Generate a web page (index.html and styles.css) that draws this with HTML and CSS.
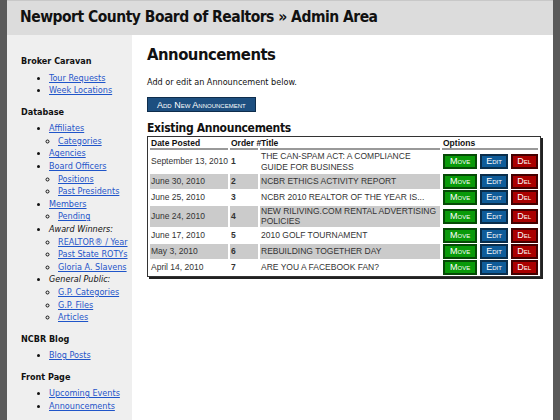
FILE: index.html
```html
<!DOCTYPE html>
<html lang="en">
<head>
    <meta charset="UTF-8">
    <title>NCBR Admin Area</title>
    <link rel="stylesheet" href="styles.css">
</head>
<body>
    <div class="page">
        <div class="header">Newport County Board of Realtors &raquo; Admin Area</div>

        <div class="body">
            <div class="sidebar">
                <h3>Broker Caravan</h3>
                <ul>
                    <li><a href="#">Tour Requests</a></li>
                    <li><a href="#">Week Locations</a></li>
                </ul>

                <h3>Database</h3>
                <ul>
                    <li><a href="#">Affiliates</a>
                        <ul>
                            <li><a href="#">Categories</a></li>
                        </ul>
                    </li>
                    <li><a href="#">Agencies</a></li>
                    <li><a href="#">Board Officers</a>
                        <ul>
                            <li><a href="#">Positions</a></li>
                            <li><a href="#">Past Presidents</a></li>
                        </ul>
                    </li>
                    <li><a href="#">Members</a>
                        <ul>
                            <li><a href="#">Pending</a></li>
                        </ul>
                    </li>
                    <li><em>Award Winners:</em>
                        <ul>
                            <li><a href="#">REALTOR&reg; / Year</a></li>
                            <li><a href="#">Past State ROTYs</a></li>
                            <li><a href="#">Gloria A. Slavens</a></li>
                        </ul>
                    </li>
                    <li><em>General Public:</em>
                        <ul>
                            <li><a href="#">G.P. Categories</a></li>
                            <li><a href="#">G.P. Files</a></li>
                            <li><a href="#">Articles</a></li>
                        </ul>
                    </li>
                </ul>

                <h3>NCBR Blog</h3>
                <ul>
                    <li><a href="#">Blog Posts</a></li>
                </ul>

                <h3>Front Page</h3>
                <ul>
                    <li><a href="#">Upcoming Events</a></li>
                    <li><a href="#">Announcements</a></li>
                </ul>
            </div>

            <div class="main">
                <h1>Announcements</h1>
                <p class="intro">Add or edit an Announcement below.</p>
                <button class="btn btn-add">Add New Announcement</button>

                <h2>Existing Announcements</h2>
                <table class="list">
                    <thead>
                        <tr>
                            <th class="c-date">Date Posted</th>
                            <th class="c-order">Order #</th>
                            <th class="c-title">Title</th>
                            <th class="c-opts">Options</th>
                        </tr>
                    </thead>
                    <tbody>
                        <tr>
                            <td class="date">September 13, 2010</td>
                            <td class="order">1</td>
                            <td>THE CAN-SPAM ACT: A COMPLIANCE GUIDE FOR BUSINESS</td>
                            <td class="opts"><div class="opts-row"><span class="btn btn-move">Move</span><span class="btn btn-edit">Edit</span><span class="btn btn-del">Del</span></div></td>
                        </tr>
                        <tr class="alt">
                            <td class="date">June 30, 2010</td>
                            <td class="order">2</td>
                            <td>NCBR ETHICS ACTIVITY REPORT</td>
                            <td class="opts"><div class="opts-row"><span class="btn btn-move">Move</span><span class="btn btn-edit">Edit</span><span class="btn btn-del">Del</span></div></td>
                        </tr>
                        <tr>
                            <td class="date">June 25, 2010</td>
                            <td class="order">3</td>
                            <td>NCBR 2010 REALTOR OF THE YEAR IS...</td>
                            <td class="opts"><div class="opts-row"><span class="btn btn-move">Move</span><span class="btn btn-edit">Edit</span><span class="btn btn-del">Del</span></div></td>
                        </tr>
                        <tr class="alt">
                            <td class="date">June 24, 2010</td>
                            <td class="order">4</td>
                            <td>NEW RILIVING.COM RENTAL ADVERTISING POLICIES</td>
                            <td class="opts"><div class="opts-row"><span class="btn btn-move">Move</span><span class="btn btn-edit">Edit</span><span class="btn btn-del">Del</span></div></td>
                        </tr>
                        <tr>
                            <td class="date">June 17, 2010</td>
                            <td class="order">5</td>
                            <td>2010 GOLF TOURNAMENT</td>
                            <td class="opts"><div class="opts-row"><span class="btn btn-move">Move</span><span class="btn btn-edit">Edit</span><span class="btn btn-del">Del</span></div></td>
                        </tr>
                        <tr class="alt">
                            <td class="date">May 3, 2010</td>
                            <td class="order">6</td>
                            <td>REBUILDING TOGETHER DAY</td>
                            <td class="opts"><div class="opts-row"><span class="btn btn-move">Move</span><span class="btn btn-edit">Edit</span><span class="btn btn-del">Del</span></div></td>
                        </tr>
                        <tr>
                            <td class="date">April 14, 2010</td>
                            <td class="order">7</td>
                            <td>ARE YOU A FACEBOOK FAN?</td>
                            <td class="opts"><div class="opts-row"><span class="btn btn-move">Move</span><span class="btn btn-edit">Edit</span><span class="btn btn-del">Del</span></div></td>
                        </tr>
                    </tbody>
                </table>
            </div>
        </div>
    </div>
</body>
</html>
```

FILE: styles.css
```css
html, body {
    margin: 0;
    padding: 0;
    background: #5a5a5a;
}
body {
    font-family: "DejaVu Sans Condensed", "DejaVu Sans", sans-serif;
    font-stretch: condensed;
    color: #111;
}
.page {
    width: 546px;
    height: 420px;
    margin: 0 auto;
    background: #fff;
    border-top: 1px solid #c8c8c8;
    overflow: hidden;
}
.header {
    height: 34px;
    line-height: 33px;
    background: #dcdcdc;
    padding-left: 13px;
    font-size: 15.5px;
    font-weight: bold;
    letter-spacing: -0.5px;
}
.body {
    display: flex;
    height: 386px;
}
.sidebar {
    width: 111px;
    background: #efefef;
    padding: 19px 0 0 14px;
    font-size: 9px;
}
.sidebar h3 {
    margin: 0 0 3.5px;
    font-size: 9px;
    line-height: 14px;
}
.sidebar ul {
    margin: 0 0 8px;
    padding-left: 28px;
    line-height: 12.6px;
    list-style: disc;
}
.sidebar ul ul {
    margin: 0;
    padding-left: 9px;
    list-style: circle;
}
.sidebar a {
    color: #1f55c9;
}
.sidebar em {
    color: #111;
}
.main {
    flex: 1;
    padding: 0 10px 0 15px;
    font-size: 9px;
}
.main h1 {
    margin: 9px 0 0;
    font-size: 16.5px;
    line-height: 22px;
    letter-spacing: -0.5px;
}
.intro {
    margin: 10px 0 9px;
    line-height: 12px;
}
.btn {
    font-family: "Liberation Sans", Arial, sans-serif;
    font-variant: small-caps;
    color: #fff;
    display: inline-block;
    box-sizing: border-box;
}
.btn-add {
    font-size: 9px;
    height: 15px;
    padding: 0 9px;
    background: #1d4f80;
    border: 1px solid #0e2d4c;
    line-height: 12px;
    margin: 0;
}
.main h2 {
    margin: 9px 0 0;
    font-size: 12px;
    line-height: 15px;
    letter-spacing: -0.3px;
}
.list {
    font-family: "Liberation Sans", Arial, sans-serif;
    font-size: 8.5px;
    color: #333;
    width: 394px;
    table-layout: fixed;
    border: 1px solid #333;
    box-shadow: 2px 2px 0 #222;
    border-spacing: 2px 1px;
}
.list th {
    text-align: left;
    font-weight: bold;
    color: #111;
    padding: 0 1px;
    line-height: 10px;
    white-space: nowrap;
    border-bottom: 2px solid #999;
}
.c-date { width: 76px; }
.c-order { width: 26px; }
.c-title { width: 178px; }
.list td {
    padding: 0 1px;
    line-height: 10.75px;
}
.list td.date {
    white-space: nowrap;
}
.list tr.alt td {
    background: #cbcbcb;
}
.list tr.alt td.opts {
    background: #fff;
}
.list td.order {
    font-weight: bold;
}
.list td.opts {
    padding: 0 0 0 1px;
}
.opts-row {
    display: flex;
    gap: 3px;
    align-items: center;
}
.opts .btn {
    font-size: 9px;
    height: 15px;
    line-height: 11px;
    padding: 0 4px;
    border: 2px solid #222;
}
.opts .btn-move {
    background: #0a9a0a;
    border-color: #064a06;
    padding: 0 5px;
}
.opts .btn-edit {
    background: #0f5c99;
    border-color: #0a2d4a;
}
.opts .btn-del {
    background: #a00;
    border-color: #400;
    padding: 0 4.5px;
}
```
